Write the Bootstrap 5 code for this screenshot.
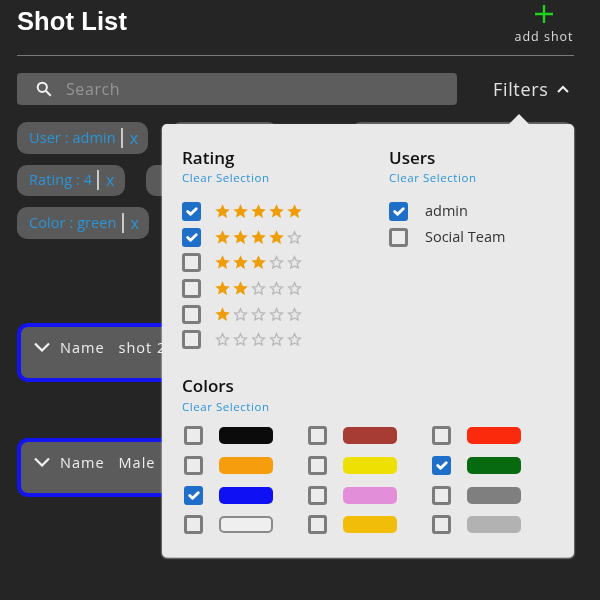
<!DOCTYPE html>
<html lang="en">
<head>
<meta charset="utf-8">
<title>Shot List</title>
<link href="https://cdn.jsdelivr.net/npm/bootstrap@5.3.0/dist/css/bootstrap.min.css" rel="stylesheet">
<style>
html,body{height:100%;}
body{background:#252525;font-family:"Open Sans","Noto Sans",sans-serif;overflow:hidden;color:#ddd;}
.page-wrap{position:relative;height:600px;padding:0 26px 0 17px;filter:blur(.45px);}
.top-head{height:56px;border-bottom:1px solid #7a7a7a;}
.page-title{font:700 25.5px/1 "Liberation Sans",sans-serif;color:#fff;margin:9px 0 0;letter-spacing:.1px;}
.add-btn{width:60px;padding-top:4px;color:#ddd;font-size:12.5px;line-height:1;letter-spacing:1px;white-space:nowrap;}
.add-btn svg{display:block;margin:0 auto 7px;}
.search-row{margin-top:17px;height:32px;}
.search-box{width:440px;height:32px;background:#5d5d5d;border-radius:4px;padding-left:19px;gap:14px;}
.search-box input{background:transparent;border:0;outline:0;font-size:16px;letter-spacing:.6px;color:#ddd;width:340px;padding:0;}
.search-box input::placeholder{color:#969696;opacity:1;}
.filters-label{margin-left:36px;font-size:18px;letter-spacing:.65px;color:#e2e2e2;}
.filters-label svg{margin-left:9px;}
.chip-rows{margin-top:17px;}
.tag-chip{height:31.5px;border-radius:10px;background:#5a5a5a;color:#2b95d8;font-size:14.5px;padding:0 10px 0 12px;white-space:nowrap;margin-bottom:11px;letter-spacing:.08px;}
.tag-x{font-size:16px;}
.tag-sep{width:2px;height:20px;background:#c9c9c9;margin:0 7px 0 5px;}
.chip-b{width:107px;margin-left:23px;}
.chip-c{width:225px;margin-left:73px;}
.chip-d{width:120px;margin-left:21px;}
.shot-item{height:59px;border:4px solid #1414f0;border-radius:11px;background:#5b5b5b;color:#eee;font-size:14.5px;letter-spacing:1px;padding:10px 0 0 13px;white-space:nowrap;}
.shot-first{margin-top:73px;}
.shot-second{margin-top:56px;}
.shot-item svg{margin:5px 10px 0 0;}
.shot-key{margin-right:14px;}
.filter-panel{position:absolute;left:162px;top:124px;width:412px;height:433px;background:#e9e9e9;border:0;border-radius:5px;padding:24px 20px 0 20px;color:#111;box-shadow:0 1px 2px #fff;}
.filter-panel::before{content:"";position:absolute;left:350px;top:-7px;width:14px;height:14px;background:#e9e9e9;transform:rotate(45deg);}
.group-title{font-size:17px;line-height:20px;font-weight:600;color:#111;margin:0;}
.clear-link{display:block;font-size:11.5px;line-height:16px;color:#2b95d8;text-decoration:none;letter-spacing:.55px;margin:2px 0 12.5px;}
.col-rating{width:207px;}
.pick-row{height:25.7px;}
.pick-row .form-check-input,.swatch-row .form-check-input{width:19px;height:19px;margin:0;border:3px solid #7c7c7c;border-radius:3px;background-color:#ececec;flex:none;background-origin:border-box;background-size:100%;}
.pick-row .form-check-input:checked,.swatch-row .form-check-input:checked{background-color:#1f6fc9;border-color:#1f6fc9;}
.star-set{margin-left:14px;gap:3px;}
.user-name{margin-left:17px;font-size:14.5px;color:#333;}
.colors-block{margin-top:23.5px;}
.colors-block .clear-link{margin:3px 0 6px;}
.swatch-grid{display:grid;grid-template-columns:repeat(3,124px);margin-left:2px;}
.swatch-row{height:29.6px;}
.colour-bar{width:54px;height:17px;border-radius:5px;margin-left:16px;}
.c-black{background:#0b0b0b}.c-brown{background:#a63c34}.c-red{background:#fc2a0c}
.c-orange{background:#f59d0c}.c-yellow{background:#efe003}.c-green{background:#086a10}
.c-blue{background:#1010f5}.c-pink{background:#e28ed9}.c-grey{background:#7f7f7f}
.c-white{background:#efefef;border:2px solid #8a8a8a}.c-amber{background:#f2bd08}.c-silver{background:#b2b2b2}
</style>
</head>
<body>
<svg width="0" height="0" class="d-block">
  <symbol id="s-on" viewBox="0 0 14 14"><path fill="#ee9d0b" d="M7 .3l2 4.4 4.8.5-3.6 3.2 1 4.8L7 10.3l-4.2 2.4 1-4.8L.2 5.2 5 4.7z"/></symbol>
  <symbol id="s-off" viewBox="0 0 14 14"><path fill="none" stroke="#b9b9b9" stroke-width="1.3" d="M7 1.6l1.6 3.6 3.9.4-2.9 2.6.8 3.9L7 10.2l-3.4 1.9.8-3.9-2.9-2.6 3.9-.4z"/></symbol>
</svg>
<div class="page-wrap">
  <header class="top-head d-flex justify-content-between align-items-start">
    <h1 class="page-title">Shot List</h1>
    <div class="add-btn text-center">
      <svg width="20" height="20" viewBox="0 0 20 20"><path d="M10 1v18M1 10h18" stroke="#1fd31f" stroke-width="2.4"/></svg>
      add shot
    </div>
  </header>

  <div class="search-row d-flex align-items-center">
    <div class="search-box d-flex align-items-center">
      <svg width="16" height="16" viewBox="0 0 16 16" fill="none" stroke="#f2f2f2" stroke-width="2"><circle cx="6.3" cy="6.3" r="4.6"/><path d="M9.8 9.8l5 5"/></svg>
      <input type="text" placeholder="Search" aria-label="Search">
    </div>
    <div class="filters-label d-flex align-items-center">Filters
      <svg width="12" height="8" viewBox="0 0 12 8" fill="none" stroke="#f0f0f0" stroke-width="2"><path d="M1 7l5-5 5 5"/></svg>
    </div>
  </div>

  <div class="chip-rows">
    <div class="d-flex">
      <div class="tag-chip d-inline-flex align-items-center">User : admin<span class="tag-sep"></span><span class="tag-x">x</span></div>
      <div class="tag-chip chip-b"></div>
      <div class="tag-chip chip-c"></div>
    </div>
    <div class="d-flex">
      <div class="tag-chip d-inline-flex align-items-center">Rating : 4<span class="tag-sep"></span><span class="tag-x">x</span></div>
      <div class="tag-chip chip-d"></div>
    </div>
    <div class="d-flex">
      <div class="tag-chip d-inline-flex align-items-center">Color : green<span class="tag-sep"></span><span class="tag-x">x</span></div>
    </div>
  </div>

  <div class="shot-item shot-first d-flex align-items-start">
    <svg width="16" height="10" viewBox="0 0 16 10" fill="none" stroke="#f2f2f2" stroke-width="2.2"><path d="M1 1.5l7 7 7-7"/></svg>
    <span class="shot-key">Name</span><span>shot 2</span>
  </div>
  <div class="shot-item shot-second d-flex align-items-start">
    <svg width="16" height="10" viewBox="0 0 16 10" fill="none" stroke="#f2f2f2" stroke-width="2.2"><path d="M1 1.5l7 7 7-7"/></svg>
    <span class="shot-key">Name</span><span>Male</span>
  </div>

  <div class="card filter-panel">
    <div class="d-flex">
      <section class="col-rating">
        <h2 class="group-title">Rating</h2>
        <a class="clear-link" href="#">Clear Selection</a>
        <div class="pick-row d-flex align-items-center"><input class="form-check-input" type="checkbox" checked aria-label="5 stars"><span class="star-set d-flex"><svg width="15" height="15"><use href="#s-on"/></svg><svg width="15" height="15"><use href="#s-on"/></svg><svg width="15" height="15"><use href="#s-on"/></svg><svg width="15" height="15"><use href="#s-on"/></svg><svg width="15" height="15"><use href="#s-on"/></svg></span></div>
        <div class="pick-row d-flex align-items-center"><input class="form-check-input" type="checkbox" checked aria-label="4 stars"><span class="star-set d-flex"><svg width="15" height="15"><use href="#s-on"/></svg><svg width="15" height="15"><use href="#s-on"/></svg><svg width="15" height="15"><use href="#s-on"/></svg><svg width="15" height="15"><use href="#s-on"/></svg><svg width="15" height="15"><use href="#s-off"/></svg></span></div>
        <div class="pick-row d-flex align-items-center"><input class="form-check-input" type="checkbox" aria-label="3 stars"><span class="star-set d-flex"><svg width="15" height="15"><use href="#s-on"/></svg><svg width="15" height="15"><use href="#s-on"/></svg><svg width="15" height="15"><use href="#s-on"/></svg><svg width="15" height="15"><use href="#s-off"/></svg><svg width="15" height="15"><use href="#s-off"/></svg></span></div>
        <div class="pick-row d-flex align-items-center"><input class="form-check-input" type="checkbox" aria-label="2 stars"><span class="star-set d-flex"><svg width="15" height="15"><use href="#s-on"/></svg><svg width="15" height="15"><use href="#s-on"/></svg><svg width="15" height="15"><use href="#s-off"/></svg><svg width="15" height="15"><use href="#s-off"/></svg><svg width="15" height="15"><use href="#s-off"/></svg></span></div>
        <div class="pick-row d-flex align-items-center"><input class="form-check-input" type="checkbox" aria-label="1 star"><span class="star-set d-flex"><svg width="15" height="15"><use href="#s-on"/></svg><svg width="15" height="15"><use href="#s-off"/></svg><svg width="15" height="15"><use href="#s-off"/></svg><svg width="15" height="15"><use href="#s-off"/></svg><svg width="15" height="15"><use href="#s-off"/></svg></span></div>
        <div class="pick-row d-flex align-items-center"><input class="form-check-input" type="checkbox" aria-label="0 stars"><span class="star-set d-flex"><svg width="15" height="15"><use href="#s-off"/></svg><svg width="15" height="15"><use href="#s-off"/></svg><svg width="15" height="15"><use href="#s-off"/></svg><svg width="15" height="15"><use href="#s-off"/></svg><svg width="15" height="15"><use href="#s-off"/></svg></span></div>
      </section>
      <section>
        <h2 class="group-title">Users</h2>
        <a class="clear-link" href="#">Clear Selection</a>
        <div class="pick-row d-flex align-items-center"><input class="form-check-input" type="checkbox" checked aria-label="admin"><span class="user-name">admin</span></div>
        <div class="pick-row d-flex align-items-center"><input class="form-check-input" type="checkbox" aria-label="Social Team"><span class="user-name">Social Team</span></div>
      </section>
    </div>
    <section class="colors-block">
      <h2 class="group-title">Colors</h2>
      <a class="clear-link" href="#">Clear Selection</a>
      <div class="swatch-grid">
        <div class="swatch-row d-flex align-items-center"><input class="form-check-input" type="checkbox" aria-label="black"><span class="colour-bar c-black"></span></div>
        <div class="swatch-row d-flex align-items-center"><input class="form-check-input" type="checkbox" aria-label="brown"><span class="colour-bar c-brown"></span></div>
        <div class="swatch-row d-flex align-items-center"><input class="form-check-input" type="checkbox" aria-label="red"><span class="colour-bar c-red"></span></div>
        <div class="swatch-row d-flex align-items-center"><input class="form-check-input" type="checkbox" aria-label="orange"><span class="colour-bar c-orange"></span></div>
        <div class="swatch-row d-flex align-items-center"><input class="form-check-input" type="checkbox" aria-label="yellow"><span class="colour-bar c-yellow"></span></div>
        <div class="swatch-row d-flex align-items-center"><input class="form-check-input" type="checkbox" checked aria-label="green"><span class="colour-bar c-green"></span></div>
        <div class="swatch-row d-flex align-items-center"><input class="form-check-input" type="checkbox" checked aria-label="blue"><span class="colour-bar c-blue"></span></div>
        <div class="swatch-row d-flex align-items-center"><input class="form-check-input" type="checkbox" aria-label="pink"><span class="colour-bar c-pink"></span></div>
        <div class="swatch-row d-flex align-items-center"><input class="form-check-input" type="checkbox" aria-label="grey"><span class="colour-bar c-grey"></span></div>
        <div class="swatch-row d-flex align-items-center"><input class="form-check-input" type="checkbox" aria-label="white"><span class="colour-bar c-white"></span></div>
        <div class="swatch-row d-flex align-items-center"><input class="form-check-input" type="checkbox" aria-label="amber"><span class="colour-bar c-amber"></span></div>
        <div class="swatch-row d-flex align-items-center"><input class="form-check-input" type="checkbox" aria-label="silver"><span class="colour-bar c-silver"></span></div>
      </div>
    </section>
  </div>
</div>
<script src="https://cdn.jsdelivr.net/npm/bootstrap@5.3.0/dist/js/bootstrap.bundle.min.js"></script>
</body>
</html>
